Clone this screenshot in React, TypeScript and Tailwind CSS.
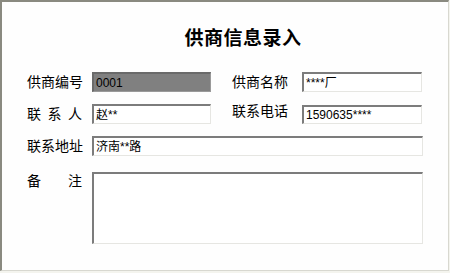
import type { ReactNode } from 'react';

const font = { fontFamily: '"Liberation Sans", "Noto Sans CJK SC", sans-serif' };

// sunken win32-style edit box
const boxCls =
  'border-t-2 border-l-2 border-r border-b border-t-[#7c7c7c] border-l-[#7c7c7c] border-r-[#e6e6e2] border-b-[#e6e6e2] text-[12px] text-black leading-none px-[2px] flex items-center';

const Label = ({ chars, className = '' }: { chars: string[]; className?: string }) => (
  <div className={`w-[55px] shrink-0 flex justify-between text-[14px] leading-none text-black ${className}`}>
    {chars.map((c, i) => <span key={i}>{c}</span>)}
  </div>
);

const Field = ({ children, className = '' }: { children?: ReactNode; className?: string }) => (
  <div className={`${boxCls} ${className}`}>{children}</div>
);

export default function App() {
  return (
    <div className="w-[450px] h-[273px] bg-[#f4f4ee]" style={font}>
      <div className="w-[449px] h-[271px] bg-[#fefefe] border-t-2 border-l-2 border-t-[#8a8a80] border-l-[#8a8a80] border-r border-b border-r-[#d8d8d0] border-b-[#d8d8d0] flex flex-col">
        <div className="pt-[25px] pl-[36px] flex justify-center text-[19px] font-bold leading-[24px] tracking-[0.5px] text-black">
          供商信息录入
        </div>

        <div className="mt-[21px] pl-[25px] flex flex-col">
          <div className="flex items-center h-[20px]">
            <Label chars={['供', '商', '编', '号']} />
            <Field className="ml-[10px] w-[119px] h-[20px] bg-[#808080] !border-t-[#6a6a6a] !border-l-[#6a6a6a] !border-r-[#9a9a9a] !border-b-[#9a9a9a]">0001</Field>
            <Label chars={['供', '商', '名', '称']} className="ml-[21px]" />
            <Field className="ml-[15px] w-[120px] h-[20px] bg-white">****厂</Field>
          </div>

          <div className="flex items-start h-[20px] mt-[12px]">
            <Label chars={['联', '系', '人']} className="mt-[3px]" />
            <Field className="ml-[10px] w-[119px] h-[20px] bg-white">赵**</Field>
            <Label chars={['联', '系', '电', '话']} className="ml-[21px]" />
            <Field className="ml-[15px] mt-[1px] w-[120px] h-[19px] bg-white">1590635****</Field>
          </div>

          <div className="flex items-center h-[20px] mt-[12px]">
            <Label chars={['联', '系', '地', '址']} />
            <Field className="ml-[10px] w-[331px] h-[20px] bg-white">济南**路</Field>
          </div>

          <div className="flex items-start mt-[16px]">
            <Label chars={['备', '注']} className="mt-[2px]" />
            <Field className="ml-[10px] w-[331px] h-[72px] bg-white" />
          </div>
        </div>
      </div>
    </div>
  );
}
